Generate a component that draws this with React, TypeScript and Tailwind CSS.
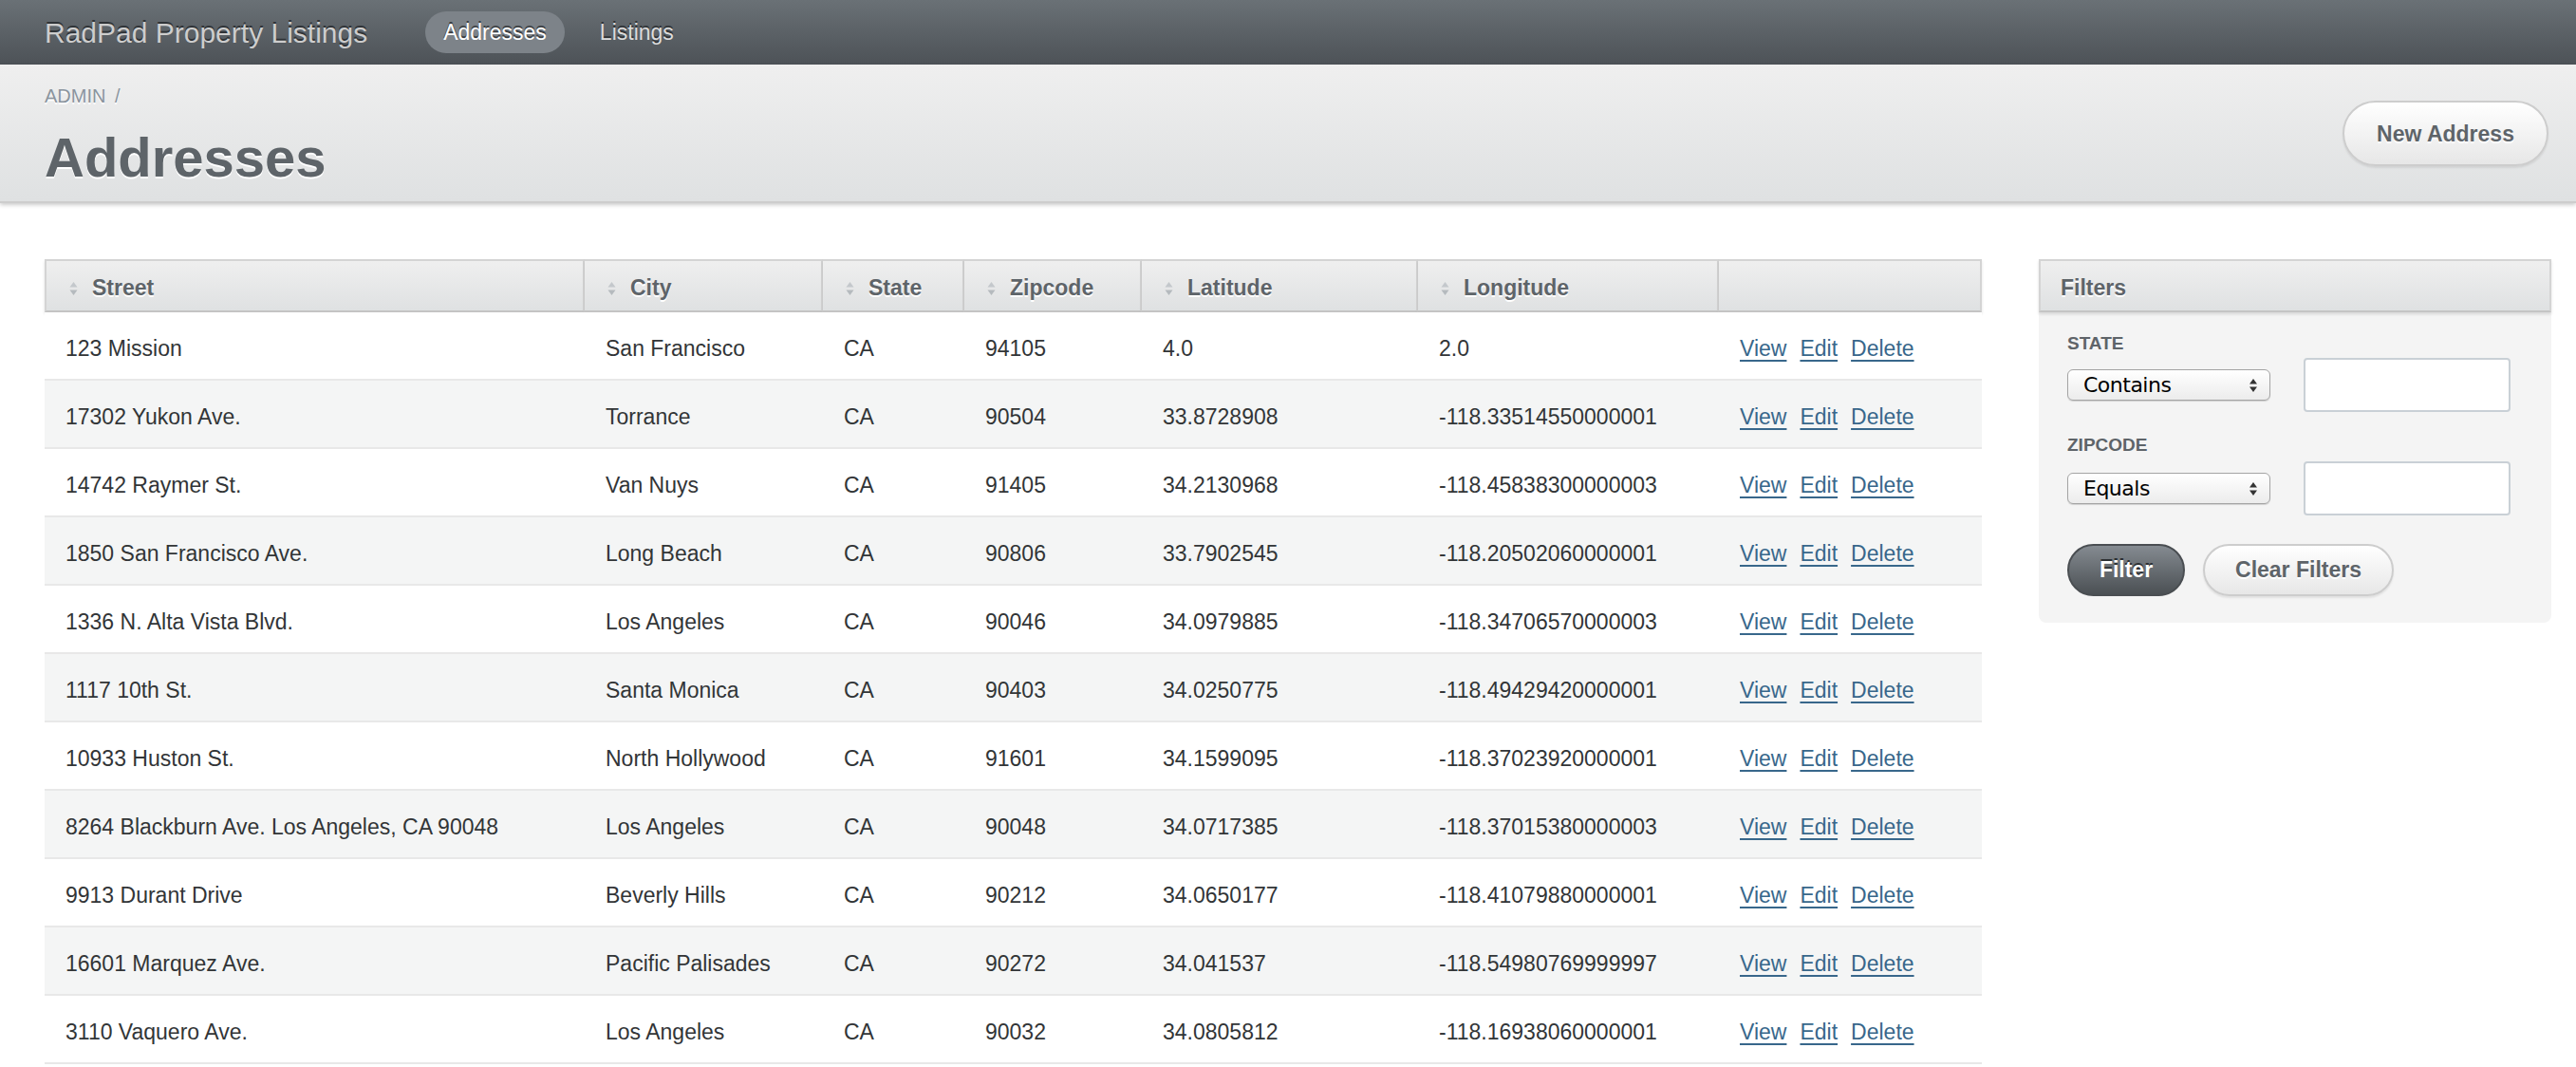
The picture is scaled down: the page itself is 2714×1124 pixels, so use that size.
import React from 'react';

const ROWS: string[][] = [
  ['123 Mission', 'San Francisco', 'CA', '94105', '4.0', '2.0'],
  ['17302 Yukon Ave.', 'Torrance', 'CA', '90504', '33.8728908', '-118.33514550000001'],
  ['14742 Raymer St.', 'Van Nuys', 'CA', '91405', '34.2130968', '-118.45838300000003'],
  ['1850 San Francisco Ave.', 'Long Beach', 'CA', '90806', '33.7902545', '-118.20502060000001'],
  ['1336 N. Alta Vista Blvd.', 'Los Angeles', 'CA', '90046', '34.0979885', '-118.34706570000003'],
  ['1117 10th St.', 'Santa Monica', 'CA', '90403', '34.0250775', '-118.49429420000001'],
  ['10933 Huston St.', 'North Hollywood', 'CA', '91601', '34.1599095', '-118.37023920000001'],
  ['8264 Blackburn Ave. Los Angeles, CA 90048', 'Los Angeles', 'CA', '90048', '34.0717385', '-118.37015380000003'],
  ['9913 Durant Drive', 'Beverly Hills', 'CA', '90212', '34.0650177', '-118.41079880000001'],
  ['16601 Marquez Ave.', 'Pacific Palisades', 'CA', '90272', '34.041537', '-118.54980769999997'],
  ['3110 Vaquero Ave.', 'Los Angeles', 'CA', '90032', '34.0805812', '-118.16938060000001'],
];

const COLUMNS = [
  { label: 'Street', width: 569 },
  { label: 'City', width: 251 },
  { label: 'State', width: 149 },
  { label: 'Zipcode', width: 187 },
  { label: 'Latitude', width: 291 },
  { label: 'Longitude', width: 317 },
  { label: '', width: 277 },
];

function SortIcon() {
  return (
    <svg width="9" height="16" viewBox="0 0 9 16" className="shrink-0">
      <path d="M4.5 1 L8.5 6.5 L0.5 6.5 Z" fill="#c4c8cc" />
      <path d="M0.5 9.5 L8.5 9.5 L4.5 15 Z" fill="#b5babe" />
    </svg>
  );
}

function SelectArrows() {
  return (
    <svg width="10" height="16" viewBox="0 0 10 16">
      <path d="M5 1 L9 6.5 L1 6.5 Z" fill="#333" />
      <path d="M1 9.5 L9 9.5 L5 15 Z" fill="#333" />
    </svg>
  );
}

function FakeSelect({ value }: { value: string }) {
  return (
    <div className="w-[214px] h-[33px] rounded-[6px] border border-[#a4a4a4] bg-gradient-to-b from-white to-[#ececec] shadow-[0_1px_1px_rgba(0,0,0,0.15)] flex items-center justify-between pl-[16px] pr-[12px]">
      <span className="text-[22px] tracking-[-0.5px] text-black font-['DejaVu_Sans',sans-serif] leading-none">{value}</span>
      <SelectArrows />
    </div>
  );
}

export default function App() {
  return (
    <div className="w-full min-h-screen bg-white font-['Liberation_Sans',Arial,sans-serif] text-[#323537]">
      {/* Header */}
      <div className="h-[68px] bg-gradient-to-b from-[#6a7176] to-[#4d5257] flex items-center pl-[47px]">
        <span className="text-[30px] text-[#cdcdcd] [text-shadow:0_-2px_0_#2f3337]">RadPad Property Listings</span>
        <div className="flex items-center gap-[18px] ml-[61px]">
          <span className="h-[44px] px-[19px] rounded-full bg-[#7d8389] text-white text-[23px] flex items-center [text-shadow:0_-2px_0_#3a3e42]">
            Addresses
          </span>
          <span className="h-[44px] px-[19px] rounded-full text-[#dcdcdc] text-[23px] flex items-center [text-shadow:0_-2px_0_#2f3337]">
            Listings
          </span>
        </div>
      </div>

      {/* Title bar */}
      <div className="h-[146px] bg-gradient-to-b from-[#efefef] to-[#dfe1e2] border-b-2 border-[#cdcdcd] shadow-[0_2px_4px_rgba(0,0,0,0.2)] flex items-center justify-between pl-[47px] pr-[29px]">
        <div className="flex flex-col self-start pt-[21px]">
          <div className="text-[20px] leading-[24px] text-[#8a949e] [text-shadow:0_2px_0_#fff]">
            ADMIN <span className="ml-[4px]">/</span>
          </div>
          <h2 className="mt-[21px] text-[58px] leading-[64px] font-bold text-[#5e6469] [text-shadow:0_2px_0_#fff]">
            Addresses
          </h2>
        </div>
        <button className="h-[69px] w-[217px] pt-[2px] rounded-full border-2 border-[#cdcdcd] bg-gradient-to-b from-white to-[#e7e7e7] shadow-[0_2px_2px_rgba(0,0,0,0.08)] text-[23px] font-bold text-[#5e6469] [text-shadow:0_2px_0_#fff]">
          New Address
        </button>
      </div>

      {/* Content */}
      <div className="flex items-start gap-[60px] pt-[59px] pl-[47px] pr-[26px]">
        <table className="w-[2041px] table-fixed border-separate border-spacing-0 text-[23px]">
          <colgroup>
            {COLUMNS.map((c, i) => (
              <col key={i} style={{ width: c.width }} />
            ))}
          </colgroup>
          <thead>
            <tr>
              {COLUMNS.map((c, i) => (
                <th
                  key={i}
                  className={`h-[56px] p-0 pt-[5px] text-left font-bold text-[#5e6469] bg-gradient-to-b from-[#efefef] to-[#dfe1e2] border-t-2 border-b-2 border-r-2 border-[#d4d4d4] border-b-[#c4c4c4] shadow-[0_2px_3px_rgba(0,0,0,0.12)] [text-shadow:0_2px_0_#fff] ${
                    i === 0 ? 'border-l-2' : ''
                  }`}
                >
                  {c.label && (
                    <div className="flex items-center pl-[24px] gap-[15px]">
                      <SortIcon />
                      <span>{c.label}</span>
                    </div>
                  )}
                </th>
              ))}
            </tr>
          </thead>
          <tbody>
            {ROWS.map((r, ri) => (
              <tr key={ri} className={ri % 2 === 1 ? 'bg-[#f4f5f5]' : 'bg-white'}>
                {r.map((v, ci) => (
                  <td key={ci} className="h-[72px] pl-[22px] pt-[6px] border-b-2 border-[#e8e8e8] whitespace-nowrap overflow-hidden">
                    {v}
                  </td>
                ))}
                <td className="h-[72px] pl-[22px] pt-[6px] border-b-2 border-[#e8e8e8] whitespace-nowrap">
                  <a className="text-[#38678b] underline decoration-2 underline-offset-[4px] mr-[14px]">View</a>
                  <a className="text-[#38678b] underline decoration-2 underline-offset-[4px] mr-[14px]">Edit</a>
                  <a className="text-[#38678b] underline decoration-2 underline-offset-[4px]">Delete</a>
                </td>
              </tr>
            ))}
          </tbody>
        </table>

        {/* Sidebar */}
        <div className="w-[540px] rounded-b-[8px] bg-[#f4f4f4]">
          <div className="h-[56px] pt-[5px] flex items-center pl-[21px] bg-gradient-to-b from-[#efefef] to-[#dfe1e2] border-2 border-[#d4d4d4] border-b-[#c4c4c4] shadow-[0_2px_3px_rgba(0,0,0,0.12)] text-[23px] font-bold text-[#5e6469] [text-shadow:0_2px_0_#fff]">
            Filters
          </div>
          <div className="pl-[30px] pt-[21px] pb-[28px]">
            <div className="text-[19px] leading-[24px] font-bold text-[#5e6469]">STATE</div>
            <div className="flex items-center gap-[35px] mt-[3px]">
              <FakeSelect value="Contains" />
              <div className="w-[218px] h-[57px] bg-white border-2 border-[#c9d0d6] rounded-[4px]" />
            </div>
            <div className="mt-[23px] text-[19px] leading-[24px] font-bold text-[#5e6469]">ZIPCODE</div>
            <div className="flex items-center gap-[35px] mt-[5px]">
              <FakeSelect value="Equals" />
              <div className="w-[218px] h-[57px] bg-white border-2 border-[#c9d0d6] rounded-[4px]" />
            </div>
            <div className="flex items-center gap-[19px] mt-[30px]">
              <button className="h-[55px] w-[124px] rounded-full bg-gradient-to-b from-[#858b91] to-[#4b5054] border-2 border-[#4a4e52] text-white text-[23px] font-bold [text-shadow:0_-2px_0_#2c3033]">
                Filter
              </button>
              <button className="h-[55px] w-[201px] rounded-full border-2 border-[#cdcdcd] bg-gradient-to-b from-white to-[#e7e7e7] shadow-[0_2px_2px_rgba(0,0,0,0.08)] text-[23px] font-bold text-[#5e6469] [text-shadow:0_2px_0_#fff]">
                Clear Filters
              </button>
            </div>
          </div>
        </div>
      </div>
    </div>
  );
}
